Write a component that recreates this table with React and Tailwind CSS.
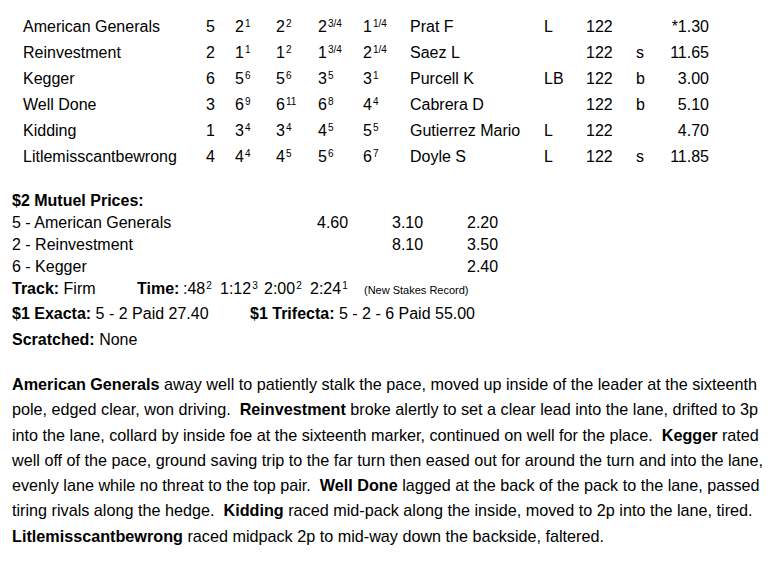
import React from "react";

const rows = [
  { name: "American Generals", pp: "5", c: [["2", "1"], ["2", "2"], ["2", "3/4"], ["1", "1/4"]], j: "Prat F", m: "L", w: "122", e: "", o: "*1.30" },
  { name: "Reinvestment", pp: "2", c: [["1", "1"], ["1", "2"], ["1", "3/4"], ["2", "1/4"]], j: "Saez L", m: "", w: "122", e: "s", o: "11.65" },
  { name: "Kegger", pp: "6", c: [["5", "6"], ["5", "6"], ["3", "5"], ["3", "1"]], j: "Purcell K", m: "LB", w: "122", e: "b", o: "3.00" },
  { name: "Well Done", pp: "3", c: [["6", "9"], ["6", "11"], ["6", "8"], ["4", "4"]], j: "Cabrera D", m: "", w: "122", e: "b", o: "5.10" },
  { name: "Kidding", pp: "1", c: [["3", "4"], ["3", "4"], ["4", "5"], ["5", "5"]], j: "Gutierrez Mario", m: "L", w: "122", e: "", o: "4.70" },
  { name: "Litlemisscantbewrong", pp: "4", c: [["4", "4"], ["4", "5"], ["5", "6"], ["6", "7"]], j: "Doyle S", m: "L", w: "122", e: "s", o: "11.85" },
];

function Sup({ children }) {
  return <sup className="text-[10px] top-[-5px] ml-[1px]">{children}</sup>;
}

function Call({ v }) {
  return (
    <span>
      {v[0]}
      <Sup>{v[1]}</Sup>
    </span>
  );
}

export default function App() {
  return (
    <div
      className="w-[775px] h-[561px] bg-white text-black overflow-hidden text-[16px]"
      style={{ fontFamily: '"Liberation Sans", Arial, sans-serif' }}
    >
      {/* Chart table */}
      <div className="pt-[14px] pl-[23px]">
        {rows.map((r) => (
          <div
            key={r.name}
            className="grid grid-cols-[183px_29px_41px_42px_45px_47px_134px_42px_50px_20px_53px] h-[26px] leading-[26px] whitespace-nowrap"
          >
            <span>{r.name}</span>
            <span>{r.pp}</span>
            {r.c.map((v, i) => (
              <Call key={i} v={v} />
            ))}
            <span>{r.j}</span>
            <span>{r.m}</span>
            <span>{r.w}</span>
            <span>{r.e}</span>
            <span className="text-right">{r.o}</span>
          </div>
        ))}
      </div>

      {/* Mutuel prices */}
      <div className="pl-[12px] pt-[20px] whitespace-nowrap">
        <div className="font-bold h-[22px] leading-[22px]">$2 Mutuel Prices:</div>
        <div className="grid grid-cols-[305px_75px_75px] h-[22px] leading-[22px]">
          <span>5 - American Generals</span>
          <span>4.60</span>
          <span>3.10</span>
        </div>
        <div className="h-[22px] leading-[22px] -mt-[22px] ml-[455px] w-[100px]">2.20</div>
        <div className="grid grid-cols-[380px_75px] h-[22px] leading-[22px]">
          <span>2 - Reinvestment</span>
          <span>8.10</span>
        </div>
        <div className="h-[22px] leading-[22px] -mt-[22px] ml-[455px] w-[100px]">3.50</div>
        <div className="grid grid-cols-[455px_75px] h-[22px] leading-[22px]">
          <span>6 - Kegger</span>
          <span>2.40</span>
        </div>
        <div className="flex items-baseline h-[22px] leading-[22px]">
          <span className="w-[125px]">
            <b>Track:</b> Firm
          </span>
          <span className="w-[46px] font-bold">Time:</span>
          <span className="w-[37px]">
            :48<Sup>2</Sup>
          </span>
          <span className="w-[44px]">
            1:12<Sup>3</Sup>
          </span>
          <span className="w-[46px]">
            2:00<Sup>2</Sup>
          </span>
          <span className="w-[54px]">
            2:24<Sup>1</Sup>
          </span>
          <span className="text-[11px]">(New Stakes Record)</span>
        </div>
        <div className="flex h-[24px] leading-[24px] mt-[2px]">
          <span className="w-[238px]">
            <b>$1 Exacta:</b> 5 - 2 Paid 27.40
          </span>
          <span>
            <b>$1 Trifecta:</b> 5 - 2 - 6 Paid 55.00
          </span>
        </div>
        <div className="h-[26px] leading-[26px] mt-[1px]">
          <b>Scratched:</b> None
        </div>
      </div>

      {/* Comments */}
      <div className="pl-[12px] pt-[19px] text-[16.2px] leading-[25.3px] whitespace-nowrap">
        <div>
          <b>American Generals</b> away well to patiently stalk the pace, moved up inside of the leader at the sixteenth
        </div>
        <div>
          pole, edged clear, won driving.&nbsp; <b>Reinvestment</b> broke alertly to set a clear lead into the lane, drifted to 3p
        </div>
        <div>
          into the lane, collard by inside foe at the sixteenth marker, continued on well for the place.&nbsp; <b>Kegger</b> rated
        </div>
        <div>
          well off of the pace, ground saving trip to the far turn then eased out for around the turn and into the lane,
        </div>
        <div>
          evenly lane while no threat to the top pair.&nbsp; <b>Well Done</b> lagged at the back of the pack to the lane, passed
        </div>
        <div>
          tiring rivals along the hedge.&nbsp; <b>Kidding</b> raced mid-pack along the inside, moved to 2p into the lane, tired.
        </div>
        <div>
          <b>Litlemisscantbewrong</b> raced midpack 2p to mid-way down the backside, faltered.
        </div>
      </div>
    </div>
  );
}
